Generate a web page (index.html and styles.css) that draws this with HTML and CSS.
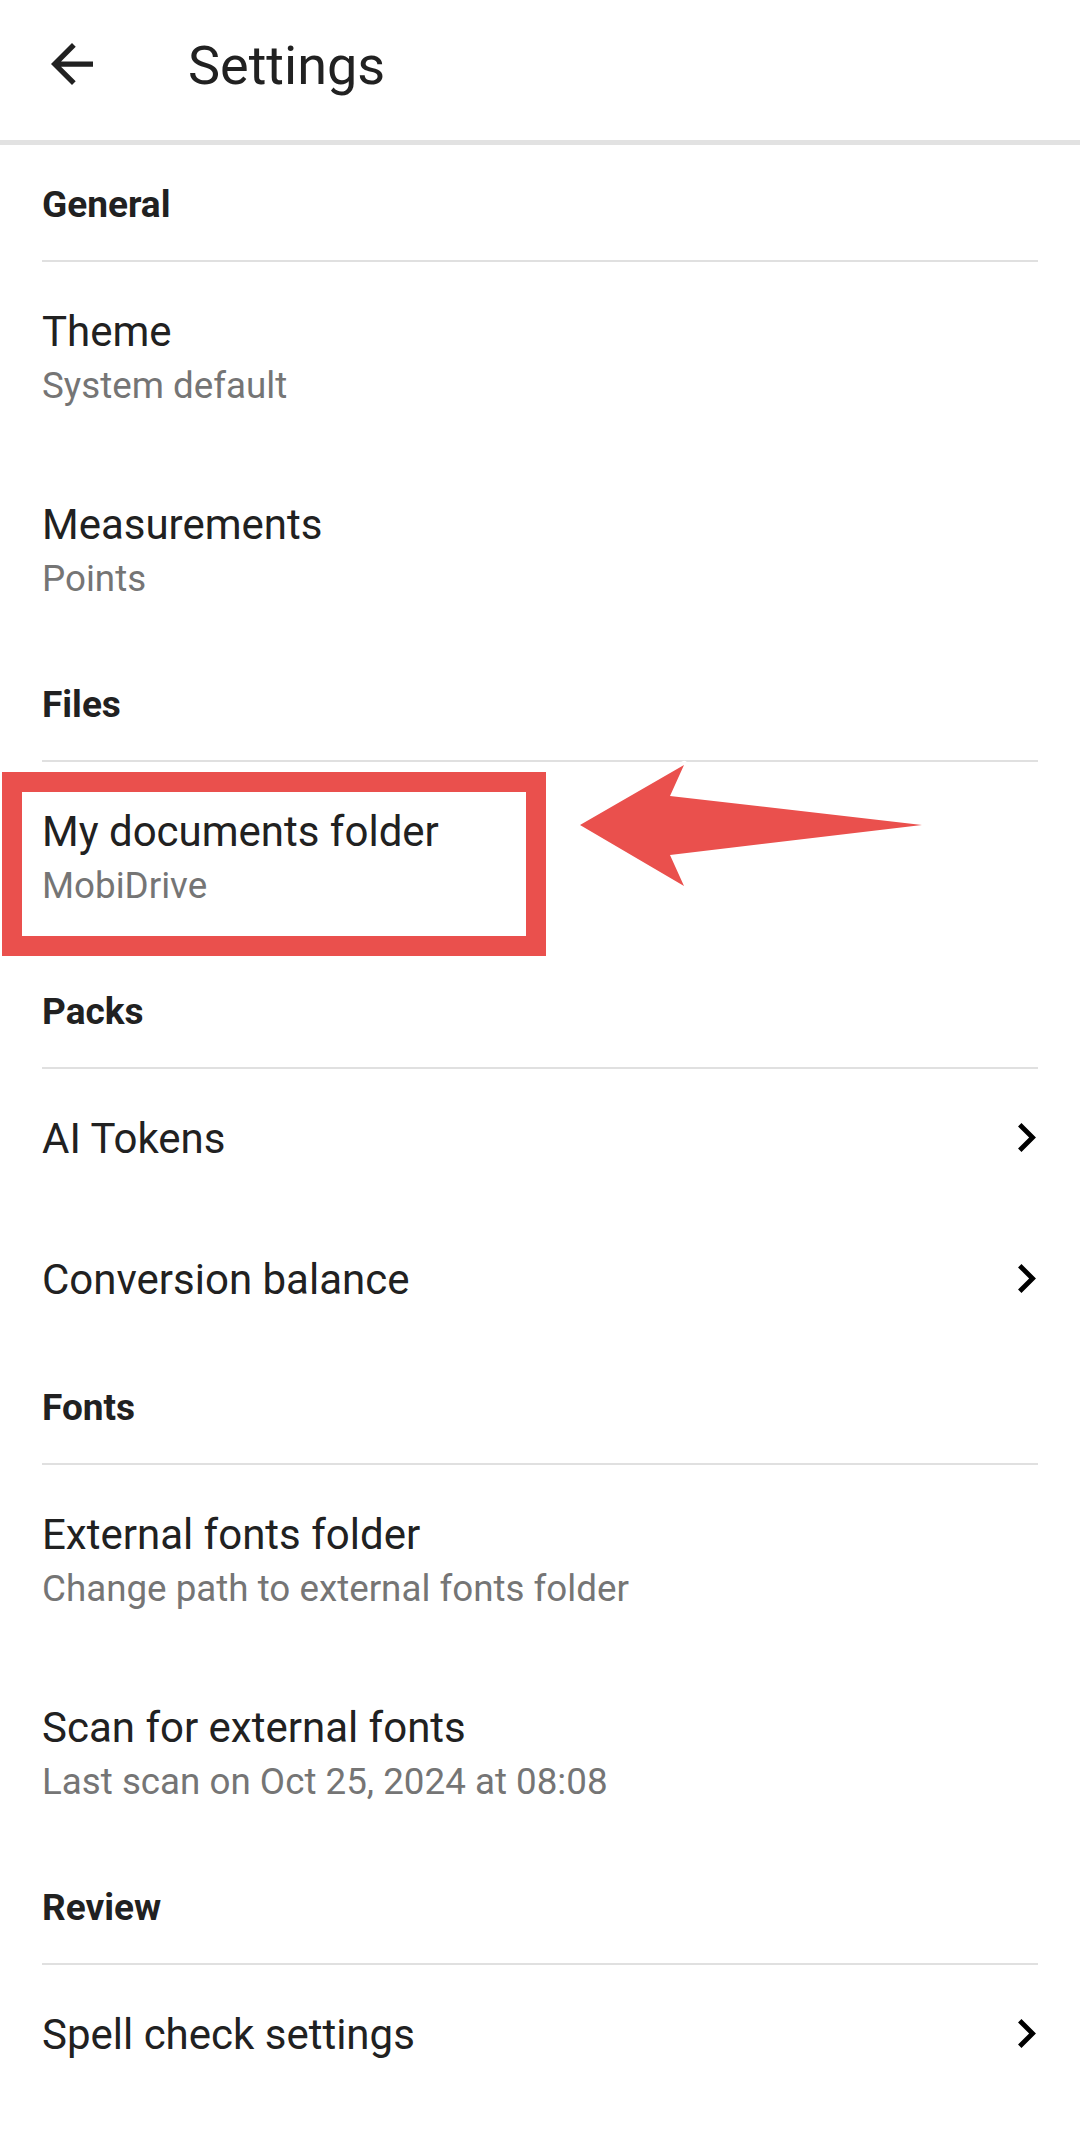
FILE: index.html
```html
<!DOCTYPE html>
<html lang="en">
<head>
<meta charset="utf-8">
<title>Settings</title>
<link rel="stylesheet" href="styles.css">
</head>
<body>
<div class="screen">
  <header class="appbar">
    <svg class="back" viewBox="4 4 16 16" width="42" height="42" aria-hidden="true">
      <path d="M20 11H7.83l5.59-5.59L12 4l-8 8 8 8 1.41-1.41L7.83 13H20v-2z" fill="#212121"/>
    </svg>
    <h1 class="title">Settings</h1>
  </header>

  <main class="list">
    <div class="category">General</div>
    <div class="item">
      <div class="texts">
        <div class="item-title">Theme</div>
        <div class="item-sub">System default</div>
      </div>
    </div>
    <div class="item">
      <div class="texts">
        <div class="item-title">Measurements</div>
        <div class="item-sub">Points</div>
      </div>
    </div>

    <div class="category">Files</div>
    <div class="item highlighted">
      <div class="texts">
        <div class="item-title">My documents folder</div>
        <div class="item-sub">MobiDrive</div>
      </div>
      <div class="mark-box"></div>
      <svg class="mark-arrow" viewBox="0 0 370 150" width="370" height="150" aria-hidden="true">
        <polygon points="10,70 114,10 100,41 352,70 100,100 114,131" fill="#ea504d" stroke="#ffffff" stroke-width="8" stroke-linejoin="round" paint-order="stroke"/>
      </svg>
    </div>

    <div class="category">Packs</div>
    <div class="item single">
      <div class="texts">
        <div class="item-title">AI Tokens</div>
      </div>
      <svg class="chev" viewBox="8.59 6 7.41 12" width="18" height="29" aria-hidden="true">
        <path d="M10 6L8.59 7.41 13.17 12l-4.58 4.59L10 18l6-6z" fill="#000"/>
      </svg>
    </div>
    <div class="item single">
      <div class="texts">
        <div class="item-title">Conversion balance</div>
      </div>
      <svg class="chev" viewBox="8.59 6 7.41 12" width="18" height="29" aria-hidden="true">
        <path d="M10 6L8.59 7.41 13.17 12l-4.58 4.59L10 18l6-6z" fill="#000"/>
      </svg>
    </div>

    <div class="category">Fonts</div>
    <div class="item">
      <div class="texts">
        <div class="item-title">External fonts folder</div>
        <div class="item-sub">Change path to external fonts folder</div>
      </div>
    </div>
    <div class="item">
      <div class="texts">
        <div class="item-title">Scan for external fonts</div>
        <div class="item-sub">Last scan on Oct 25, 2024 at 08:08</div>
      </div>
    </div>

    <div class="category">Review</div>
    <div class="item single">
      <div class="texts">
        <div class="item-title">Spell check settings</div>
      </div>
      <svg class="chev" viewBox="8.59 6 7.41 12" width="18" height="29" aria-hidden="true">
        <path d="M10 6L8.59 7.41 13.17 12l-4.58 4.59L10 18l6-6z" fill="#000"/>
      </svg>
    </div>
  </main>
</div>
</body>
</html>
```

FILE: styles.css
```css
* { box-sizing: border-box; }

html, body {
  margin: 0;
  padding: 0;
  background: #ffffff;
}

body {
  font-family: Roboto, "Noto Sans", "Liberation Sans", sans-serif;
  color: #212121;
  width: 1080px;
  height: 2147px;
  overflow: hidden;
}

.screen {
  width: 1080px;
}

.appbar {
  height: 145px;
  display: flex;
  align-items: center;
  padding: 0 0 12px 51px;
  border-bottom: 5px solid #e2e2e2;
}

.back {
  display: block;
  flex: none;
}

.title {
  margin: 3px 0 0 95px;
  font-size: 54px;
  line-height: 64px;
  font-weight: 400;
  color: #212121;
}

.list {
  margin-top: 3px;
}

.category {
  margin: 0 42px;
  padding: 35px 0 33px;
  font-size: 37px;
  line-height: 44px;
  font-weight: 700;
  color: #212121;
  border-bottom: 2px solid #e0e0e0;
}

.item {
  position: relative;
  display: flex;
  align-items: center;
  padding: 42px 44px 43px 42px;
}

.item.single {
  padding-bottom: 43px;
}

.texts {
  flex: 1;
  min-width: 0;
}

.item-title {
  font-size: 42px;
  line-height: 56px;
  color: #212121;
}

.item-sub {
  font-size: 36.75px;
  line-height: 52px;
  color: #757575;
}

.chev {
  display: block;
  flex: none;
  margin-top: -3px;
}

.mark-box {
  position: absolute;
  left: 2px;
  top: 10px;
  width: 544px;
  height: 184px;
  border: 20px solid #ea504d;
}

.mark-arrow {
  position: absolute;
  left: 570px;
  top: -7px;
  overflow: visible;
}
```
